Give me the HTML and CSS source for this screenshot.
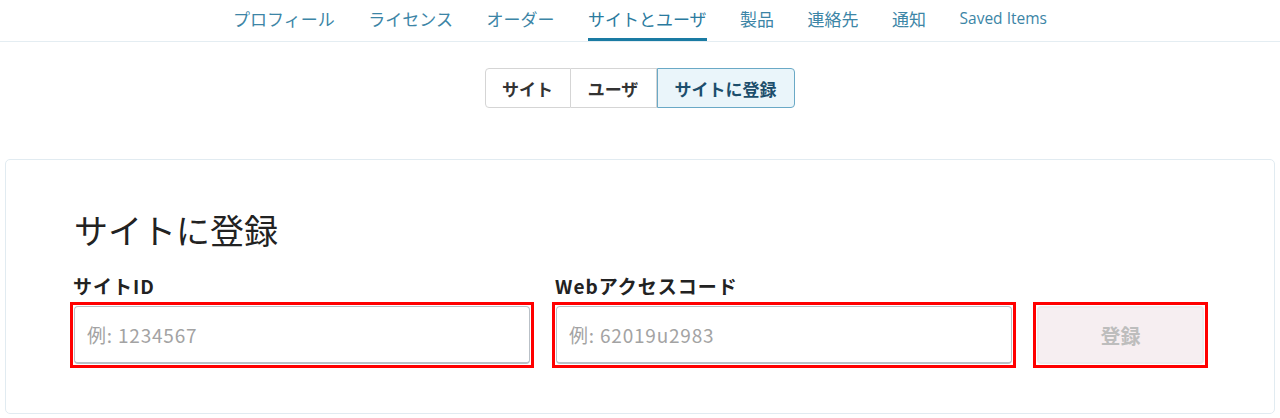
FILE: index.html
```html
<!DOCTYPE html>
<html lang="ja">
<head>
<meta charset="utf-8">
<link rel="stylesheet" href="styles.css">
</head>
<body>
<nav class="tabs">
  <a class="tab">プロフィール</a>
  <a class="tab">ライセンス</a>
  <a class="tab">オーダー</a>
  <a class="tab active">サイトとユーザ</a>
  <a class="tab">製品</a>
  <a class="tab">連絡先</a>
  <a class="tab">通知</a>
  <a class="tab latin">Saved Items</a>
</nav>
<div class="seg-wrap">
  <div class="seg">
    <button class="seg-btn w1">サイト</button>
    <button class="seg-btn w2">ユーザ</button>
    <button class="seg-btn w3 on">サイトに登録</button>
  </div>
</div>
<section class="card">
  <h1 class="title">サイトに登録</h1>
  <div class="row">
    <div class="field f1">
      <label class="label">サイトID</label>
      <div class="frame"><input class="input" placeholder="例: 1234567"></div>
    </div>
    <div class="field f2">
      <label class="label">Webアクセスコード</label>
      <div class="frame"><input class="input" placeholder="例: 62019u2983"></div>
    </div>
    <div class="field f3">
      <div class="frame"><button class="submit">登録</button></div>
    </div>
  </div>
</section>
</body>
</html>
```
FILE: styles.css
```css
* { box-sizing: border-box; }
body {
  margin: 0;
  font-family: "Noto Sans CJK JP", "Noto Sans", sans-serif;
  background: #fff;
  color: #222;
}
.tabs {
  display: flex;
  justify-content: center;
  gap: 33.5px;
  height: 42px;
  border-bottom: 1px solid #e4edf2;
  padding-left: 0;
}
.tab {
  font-size: 17px;
  color: #3c85a6;
  line-height: 37px;
  height: 41px;
  border-bottom: 3px solid transparent;
  white-space: nowrap;
}
.tab.latin { font-family: "Open Sans", sans-serif; font-size: 15.5px; }
.tab.active { border-bottom-color: #1a7ba3; color: #2a7a9e; }
.seg-wrap {
  display: flex;
  justify-content: center;
  padding-top: 26px;
}
.seg {
  display: flex;
  height: 40px;
  margin-left: -1px;
}
.seg-btn {
  font-family: inherit;
  font-weight: bold;
  font-size: 17px;
  color: #333;
  background: #fff;
  border: 1px solid #d5d5d5;
  padding: 0;
}
.seg-btn + .seg-btn { border-left: none; }
.w1 { width: 86px; border-radius: 4px 0 0 4px; }
.w2 { width: 86px; }
.w3 { width: 138px; border-radius: 0 4px 4px 0; }
.seg-btn.on {
  background: #eaf5fa;
  border: 1px solid #6aa9c6;
  color: #1c4e6c;
}
.card {
  margin: 51px 5px 0 5px;
  height: 255px;
  border: 1px solid #e1ebf1;
  border-radius: 5px;
  padding: 48px 0 0 68px;
}
.title {
  margin: 0;
  font-size: 34px;
  font-weight: normal;
  line-height: 44px;
  color: #222;
}
.row {
  display: flex;
  gap: 26px;
  margin-top: 20px;
}
.field { display: flex; flex-direction: column; }
.label {
  font-size: 19px;
  letter-spacing: 1px;
  font-weight: bold;
  color: #222;
  line-height: 28px;
  height: 30px;
  margin-left: -1px;
}
.frame {
  border: 3px solid #ff0000;
  padding: 1px;
  margin: 0 -4px;
}
.input {
  display: block;
  width: 456px;
  height: 58px;
  border: 1px solid #b9c0c7;
  border-bottom-width: 2px;
  border-radius: 4px;
  padding: 0 12px;
  font-family: inherit;
  font-size: 19px;
  letter-spacing: 0.8px;
  outline: none;
}
.input::placeholder { color: #a3a3a3; }
.f3 { padding-top: 30px; margin-left: -1px; }
.submit {
  display: block;
  width: 167px;
  height: 58px;
  background: #f6eef1;
  border: 2px solid #eeeaec;
  border-radius: 4px;
  font-family: inherit;
  font-weight: bold;
  font-size: 20px;
  color: #bdbdbd;
}
```
